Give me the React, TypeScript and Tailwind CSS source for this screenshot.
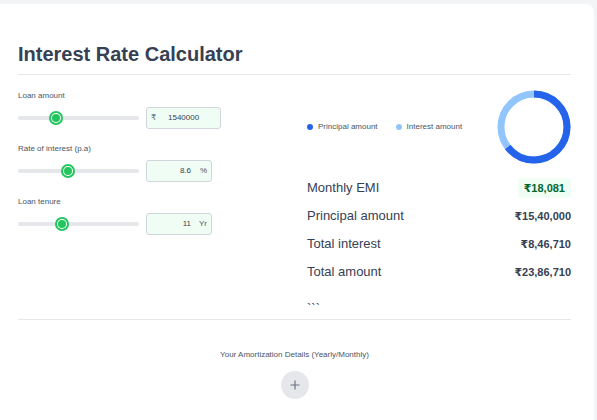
import { Plus } from 'lucide-react';

type SliderRowProps = {
  label: string;
  percent: number;
  value: string;
  prefix?: string;
  suffix?: string;
  wide?: boolean;
};

function SliderRow({ label, percent, value, prefix, suffix, wide }: SliderRowProps) {
  return (
    <div className="flex flex-col">
      <div className="text-[8px] leading-[12px] text-gray-600">{label}</div>
      <div className="mt-[5px] flex items-center gap-[7px]">
        <div className="relative h-[4px] w-[121px] rounded-full bg-gray-200">
          <div
            className="absolute top-1/2 h-[14px] w-[14px] -translate-x-1/2 -translate-y-1/2 rounded-full bg-[#22c55e] p-[2px]"
            style={{ left: `${percent}%` }}
          >
            <div className="h-full w-full rounded-full bg-white p-[1px]">
              <div className="h-full w-full rounded-full bg-[#22c55e]" />
            </div>
          </div>
        </div>
        <div
          className={`flex h-[22px] items-center rounded-[3px] border border-gray-300 bg-[#f0fdf4] text-[8px] text-gray-700 ${
            wide ? 'w-[75px]' : 'w-[66px]'
          }`}
        >
          {prefix && <span className="w-[21px] pl-[4px] text-gray-600">{prefix}</span>}
          {prefix ? (
            <span>{value}</span>
          ) : (
            <>
              <span className="flex-1 text-right">{value}</span>
              <span className="mr-[4px] w-[16px] text-right text-gray-600">{suffix}</span>
            </>
          )}
        </div>
      </div>
    </div>
  );
}

function Donut() {
  const r = 33;
  const c = 2 * Math.PI * r;
  const principal = 1540000 / 2386710;
  return (
    <svg width="74" height="74" viewBox="0 0 74 74">
      <circle cx="37" cy="37" r={r} fill="none" stroke="#93c5fd" strokeWidth="7" />
      <circle
        cx="37"
        cy="37"
        r={r}
        fill="none"
        stroke="#2563eb"
        strokeWidth="7"
        strokeDasharray={`${c * principal} ${c}`}
        transform="rotate(-90 37 37)"
      />
    </svg>
  );
}

const summary = [
  { label: 'Principal amount', value: '₹15,40,000' },
  { label: 'Total interest', value: '₹8,46,710' },
  { label: 'Total amount', value: '₹23,86,710' },
];

export default function App() {
  return (
    <div className="h-[420px] w-full bg-gray-100 pt-[4px] pr-[3px] font-['Liberation_Sans','DejaVu_Sans',sans-serif]">
      <div className="h-full rounded-tr-lg bg-white pt-[36px] pr-[23px] pl-[18px]">
        <h1 className="border-b border-gray-200 pb-[6px] text-[20px] leading-[28px] font-bold text-gray-700">
          Interest Rate Calculator
        </h1>

        <div className="flex border-b border-gray-200 pt-[15px]">
          <div className="flex w-[271px] flex-col gap-[14px]">
            <SliderRow label="Loan amount" percent={31} value="1540000" prefix="₹" wide />
            <SliderRow label="Rate of interest (p.a)" percent={41} value="8.6" suffix="%" />
            <SliderRow label="Loan tenure" percent={36} value="11" suffix="Yr" />
          </div>

          <div className="ml-[18px] flex flex-1 flex-col">
            <div className="flex items-center justify-between">
              <div className="flex items-center text-[8px] text-gray-600">
                <span className="h-[6px] w-[6px] rounded-full bg-[#2563eb]" />
                <span className="ml-[5px]">Principal amount</span>
                <span className="ml-[18px] h-[6px] w-[6px] rounded-full bg-[#93c5fd]" />
                <span className="ml-[5px]">Interest amount</span>
              </div>
              <Donut />
            </div>

            <div className="mt-[10px] flex h-[28px] items-center justify-between">
              <span className="text-[13px] text-gray-700">Monthly EMI</span>
              <span className="rounded-[3px] bg-[#f0fdf4] px-[6px] text-[11px] leading-[20px] font-bold text-green-800">
                ₹18,081
              </span>
            </div>
            {summary.map((row) => (
              <div key={row.label} className="flex h-[28px] items-center justify-between">
                <span className="text-[13px] text-gray-700">{row.label}</span>
                <span className="text-[11px] font-bold text-gray-700">{row.value}</span>
              </div>
            ))}
            <div className="mt-[13px] h-[20px] text-[13px] leading-[20px] text-gray-700">```</div>
          </div>
        </div>

        <div className="flex flex-col items-center pt-[29px]">
          <div className="text-[8px] leading-[12px] text-gray-600">
            Your Amortization Details (Yearly/Monthly)
          </div>
          <button className="mt-[10px] flex h-[28px] w-[28px] items-center justify-center rounded-full bg-gray-200 text-gray-500">
            <Plus size={14} strokeWidth={2} />
          </button>
        </div>
      </div>
    </div>
  );
}
